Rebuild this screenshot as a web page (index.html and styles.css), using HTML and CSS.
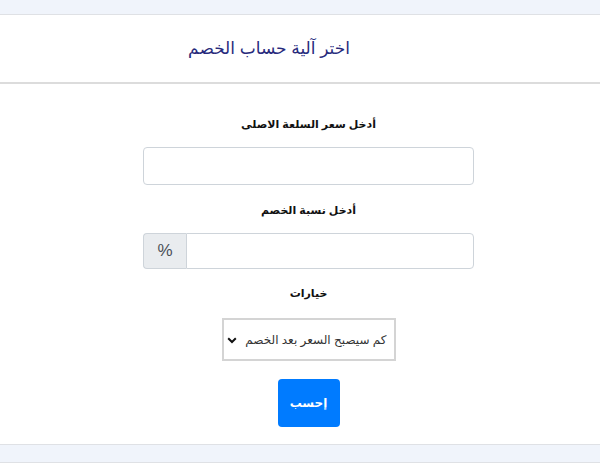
FILE: index.html
```html
<!DOCTYPE html>
<html lang="ar" dir="rtl">
<head>
<meta charset="utf-8">
<title>حساب الخصم</title>
<link rel="stylesheet" href="styles.css">
</head>
<body>
<div class="topband"></div>
<header class="header">
  <h1 class="title">اختر آلية حساب الخصم</h1>
</header>
<main class="main">
  <form class="form">
    <label class="label lbl1">أدخل سعر السلعة الاصلى</label>
    <input class="control" type="text">
    <label class="label lbl2">أدخل نسبة الخصم</label>
    <div class="group">
      <input class="control grp-input" type="text">
      <span class="addon">%</span>
    </div>
    <label class="label lbl3">خيارات</label>
    <div class="select-wrap">
      <select class="select">
        <option>كم سيصبح السعر بعد الخصم</option>
      </select>
      <svg class="chev" width="10" height="7" viewBox="0 0 10 7"><path d="M1.2 1.3 L5 5 L8.8 1.3" fill="none" stroke="#111" stroke-width="2"/></svg>
    </div>
    <button class="btn" type="button">إحسب</button>
  </form>
</main>
<footer class="footer"></footer>
</body>
</html>
```
FILE: styles.css
```css
* { box-sizing: border-box; }
body {
  margin: 0;
  background: #fff;
  font-family: "Liberation Sans", "DejaVu Sans", sans-serif;
  color: #212529;
}
.topband {
  height: 15px;
  background: #f0f4fb;
  border-bottom: 1px solid #dfe1e5;
}
.header {
  height: 69px;
  border-bottom: 2px solid #dcdcdc;
  display: flex;
  align-items: center;
  justify-content: center;
  padding-left: 0;
  padding-right: 62px;
}
.title {
  margin: 0;
  font-size: 17px;
  font-weight: normal;
  color: #272a7c;
}
.main {
  padding-top: 30px;
  padding-bottom: 17px;
  padding-left: 17px;
  border-bottom: 1px solid #dfe1e5;
}
.form {
  width: 331px;
  margin: 0 auto;
  display: flex;
  flex-direction: column;
  align-items: center;
}
.label {
  display: block;
  font-size: 11px;
  font-weight: bold;
  line-height: 20px;
  color: #111;
  margin-bottom: 13px;
}
.lbl2 { margin-top: 15px; }
.lbl3 { margin-top: 14px; margin-bottom: 15px; }
.control {
  width: 331px;
  height: 38px;
  border: 1px solid #ced4da;
  border-radius: 4px;
  background: #fff;
  font-size: 14px;
  padding: 6px 12px;
}
.group {
  display: flex;
  flex-direction: row;
  width: 331px;
  height: 36px;
}
.grp-input {
  flex: 1;
  width: auto;
  height: 36px;
  border-radius: 0 4px 4px 0;
}
.addon {
  width: 43px;
  display: flex;
  align-items: center;
  justify-content: center;
  background: #e9ecef;
  border: 1px solid #ced4da;
  border-right: none;
  border-radius: 4px 0 0 4px;
  font-size: 17px;
  color: #495057;
  order: 2;
}
.select-wrap {
  position: relative;
  width: 174px;
  height: 43px;
}
.select {
  appearance: none;
  -webkit-appearance: none;
  width: 174px;
  height: 43px;
  border: 2px solid #d4d4d4;
  border-radius: 0;
  background: #fff;
  font-family: "Liberation Sans", "DejaVu Sans", sans-serif;
  font-size: 12px;
  color: #333;
  padding: 0 7px 0 18px;
  direction: rtl;
}
.chev {
  position: absolute;
  left: 5px;
  top: 19px;
}
.btn {
  margin-top: 18px;
  width: 62px;
  height: 48px;
  background: #007bff;
  border: none;
  border-radius: 4px;
  color: #fff;
  font-family: "Liberation Sans", "DejaVu Sans", sans-serif;
  font-size: 12px;
  font-weight: bold;
}
.footer {
  height: 18px;
  background: #f0f4fb;
  border-bottom: 1px solid #dfe1e5;
}
```
